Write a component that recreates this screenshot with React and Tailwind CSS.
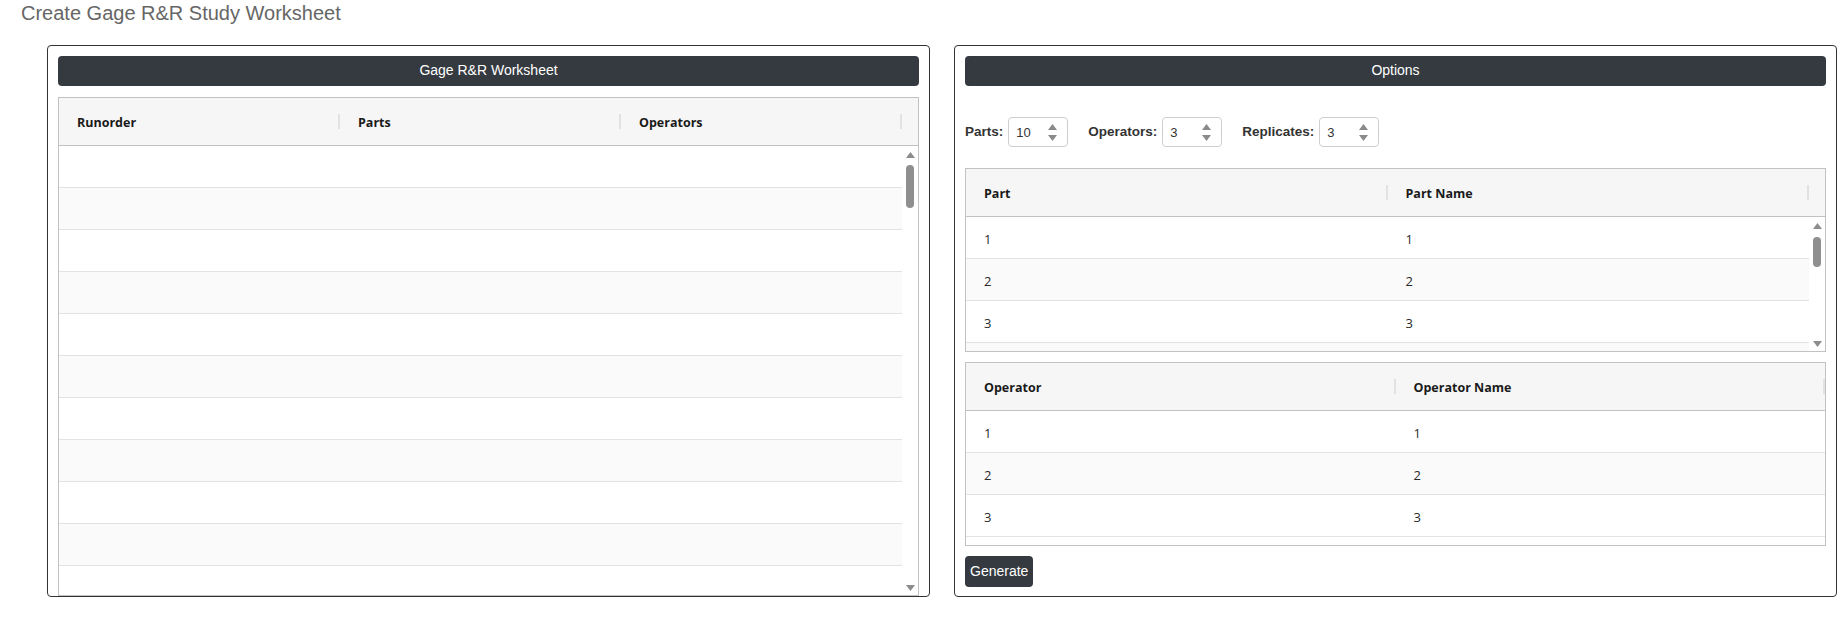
import React from 'react';

const sans = { fontFamily: '"Liberation Sans", Arial, sans-serif' };
const grid = { fontFamily: '"Open Sans", "Noto Sans", sans-serif' };

const worksheetColumns = ['Runorder', 'Parts', 'Operators'];
// only the first rows of the parts list show above the fold
const partRows = [['1', '1'], ['2', '2'], ['3', '3'], ['', '']];
const operatorRows = [['1', '1'], ['2', '2'], ['3', '3']];

function Arrow({ down }) {
  return (
    <svg width="9" height="6" viewBox="0 0 9 6" className="shrink-0">
      <polygon points={down ? '0,0 9,0 4.5,6' : '0,6 9,6 4.5,0'} fill="#8c8c8c" />
    </svg>
  );
}

function Scrollbar({ thumbHeight, thumbGap }) {
  return (
    <div className="flex w-[16px] shrink-0 flex-col items-center pt-[6px] pb-[4px]">
      <Arrow />
      <div className="w-[8px] rounded-full bg-[#8f8f8f]" style={{ height: thumbHeight, marginTop: thumbGap }} />
      <div className="flex-1" />
      <Arrow down />
    </div>
  );
}

// kendo-ish grid: grey header with little resize marks, striped rows
function Grid({ columns, rows, scroll, thumbHeight, thumbGap, className = '' }) {
  return (
    <div className={`flex min-h-0 flex-col overflow-hidden border border-[#c2c2c2] ${className}`} style={grid}>
      <div className="flex h-[48px] shrink-0 border-b border-[#c2c2c2] bg-[#f6f6f6]">
        {columns.map((col) => (
          <div key={col} className="flex flex-1 items-center">
            <span className="flex-1 pt-[4px] pl-[18px] text-[12.5px] font-bold text-[#1a1a1a]">{col}</span>
            <span className="h-[15px] w-[2px] bg-[#e2e2e2]" />
          </div>
        ))}
        {scroll && <div className="w-[16px] shrink-0" />}
      </div>
      <div className="flex min-h-0 flex-1">
        <div className="min-w-0 flex-1 overflow-hidden">
          {rows.map((row, i) => (
            <div
              key={i}
              className={`flex h-[42px] shrink-0 items-center border-b border-[#e3e3e3] ${i % 2 ? 'bg-[#fafafa]' : 'bg-white'}`}
            >
              {row.map((cell, j) => (
                <div key={j} className="flex-1 pt-[4px] pl-[18px] text-[13px] text-[#2a2a2a]">
                  {cell}
                </div>
              ))}
            </div>
          ))}
        </div>
        {scroll && <Scrollbar thumbHeight={thumbHeight} thumbGap={thumbGap} />}
      </div>
    </div>
  );
}

function TitleBar({ children }) {
  return (
    <div className="flex h-[30px] shrink-0 items-center justify-center rounded-[4px] bg-[#343a40] pb-[1px] text-[14px] text-white" style={sans}>
      {children}
    </div>
  );
}

function NumberField({ label, value }) {
  return (
    <div className="flex items-center gap-[5px]" style={sans}>
      <span className="text-[13.5px] font-bold text-[#333]">{label}:</span>
      <div className="flex h-[30px] w-[60px] items-center justify-between rounded-[4px] border border-[#cfcfcf] pl-[7px] pr-[10px]">
        <span className="pt-[2px] text-[13px] text-[#333]">{value}</span>
        <svg width="9" height="17" viewBox="0 0 9 17">
          <polygon points="0,6 9,6 4.5,0" fill="#8a8a8a" />
          <polygon points="0,11 9,11 4.5,17" fill="#8a8a8a" />
        </svg>
      </div>
    </div>
  );
}

export default function App() {
  return (
    <div className="min-h-[635px] bg-white">
      <h1 className="pt-[1px] pl-[21px] text-[20px] leading-[24px] font-normal text-[#666]" style={sans}>
        Create Gage R&amp;R Study Worksheet
      </h1>

      <div className="mt-[20px] ml-[47px] grid w-[1790px] grid-cols-2 gap-[24px]">
        <section className="flex h-[552px] flex-col overflow-hidden rounded-[4px] border border-[#333] px-[10px] pt-[10px]">
          <TitleBar>Gage R&amp;R Worksheet</TitleBar>
          <Grid
            className="mt-[11px] flex-1"
            columns={worksheetColumns}
            rows={Array.from({ length: 11 }, () => ['', '', ''])}
            scroll
            thumbHeight={43}
            thumbGap={7}
          />
        </section>

        <section className="flex h-[552px] flex-col rounded-[4px] border border-[#333] px-[10px] pt-[10px] pb-[9px]">
          <TitleBar>Options</TitleBar>
          <div className="mt-[31px] flex h-[30px] items-center gap-[20px]">
            <NumberField label="Parts" value="10" />
            <NumberField label="Operators" value="3" />
            <NumberField label="Replicates" value="3" />
          </div>
          <Grid
            className="mt-[21px] h-[184px] shrink-0"
            columns={['Part', 'Part Name']}
            rows={partRows}
            scroll
            thumbHeight={30}
            thumbGap={8}
          />
          <Grid
            className="mt-[10px] h-[184px] shrink-0"
            columns={['Operator', 'Operator Name']}
            rows={operatorRows}
          />
          <button
            className="mt-[10px] h-[31px] w-fit rounded-[4px] bg-[#343a40] px-[5px] text-[14px] text-white"
            style={sans}
          >
            Generate
          </button>
        </section>
      </div>
    </div>
  );
}
